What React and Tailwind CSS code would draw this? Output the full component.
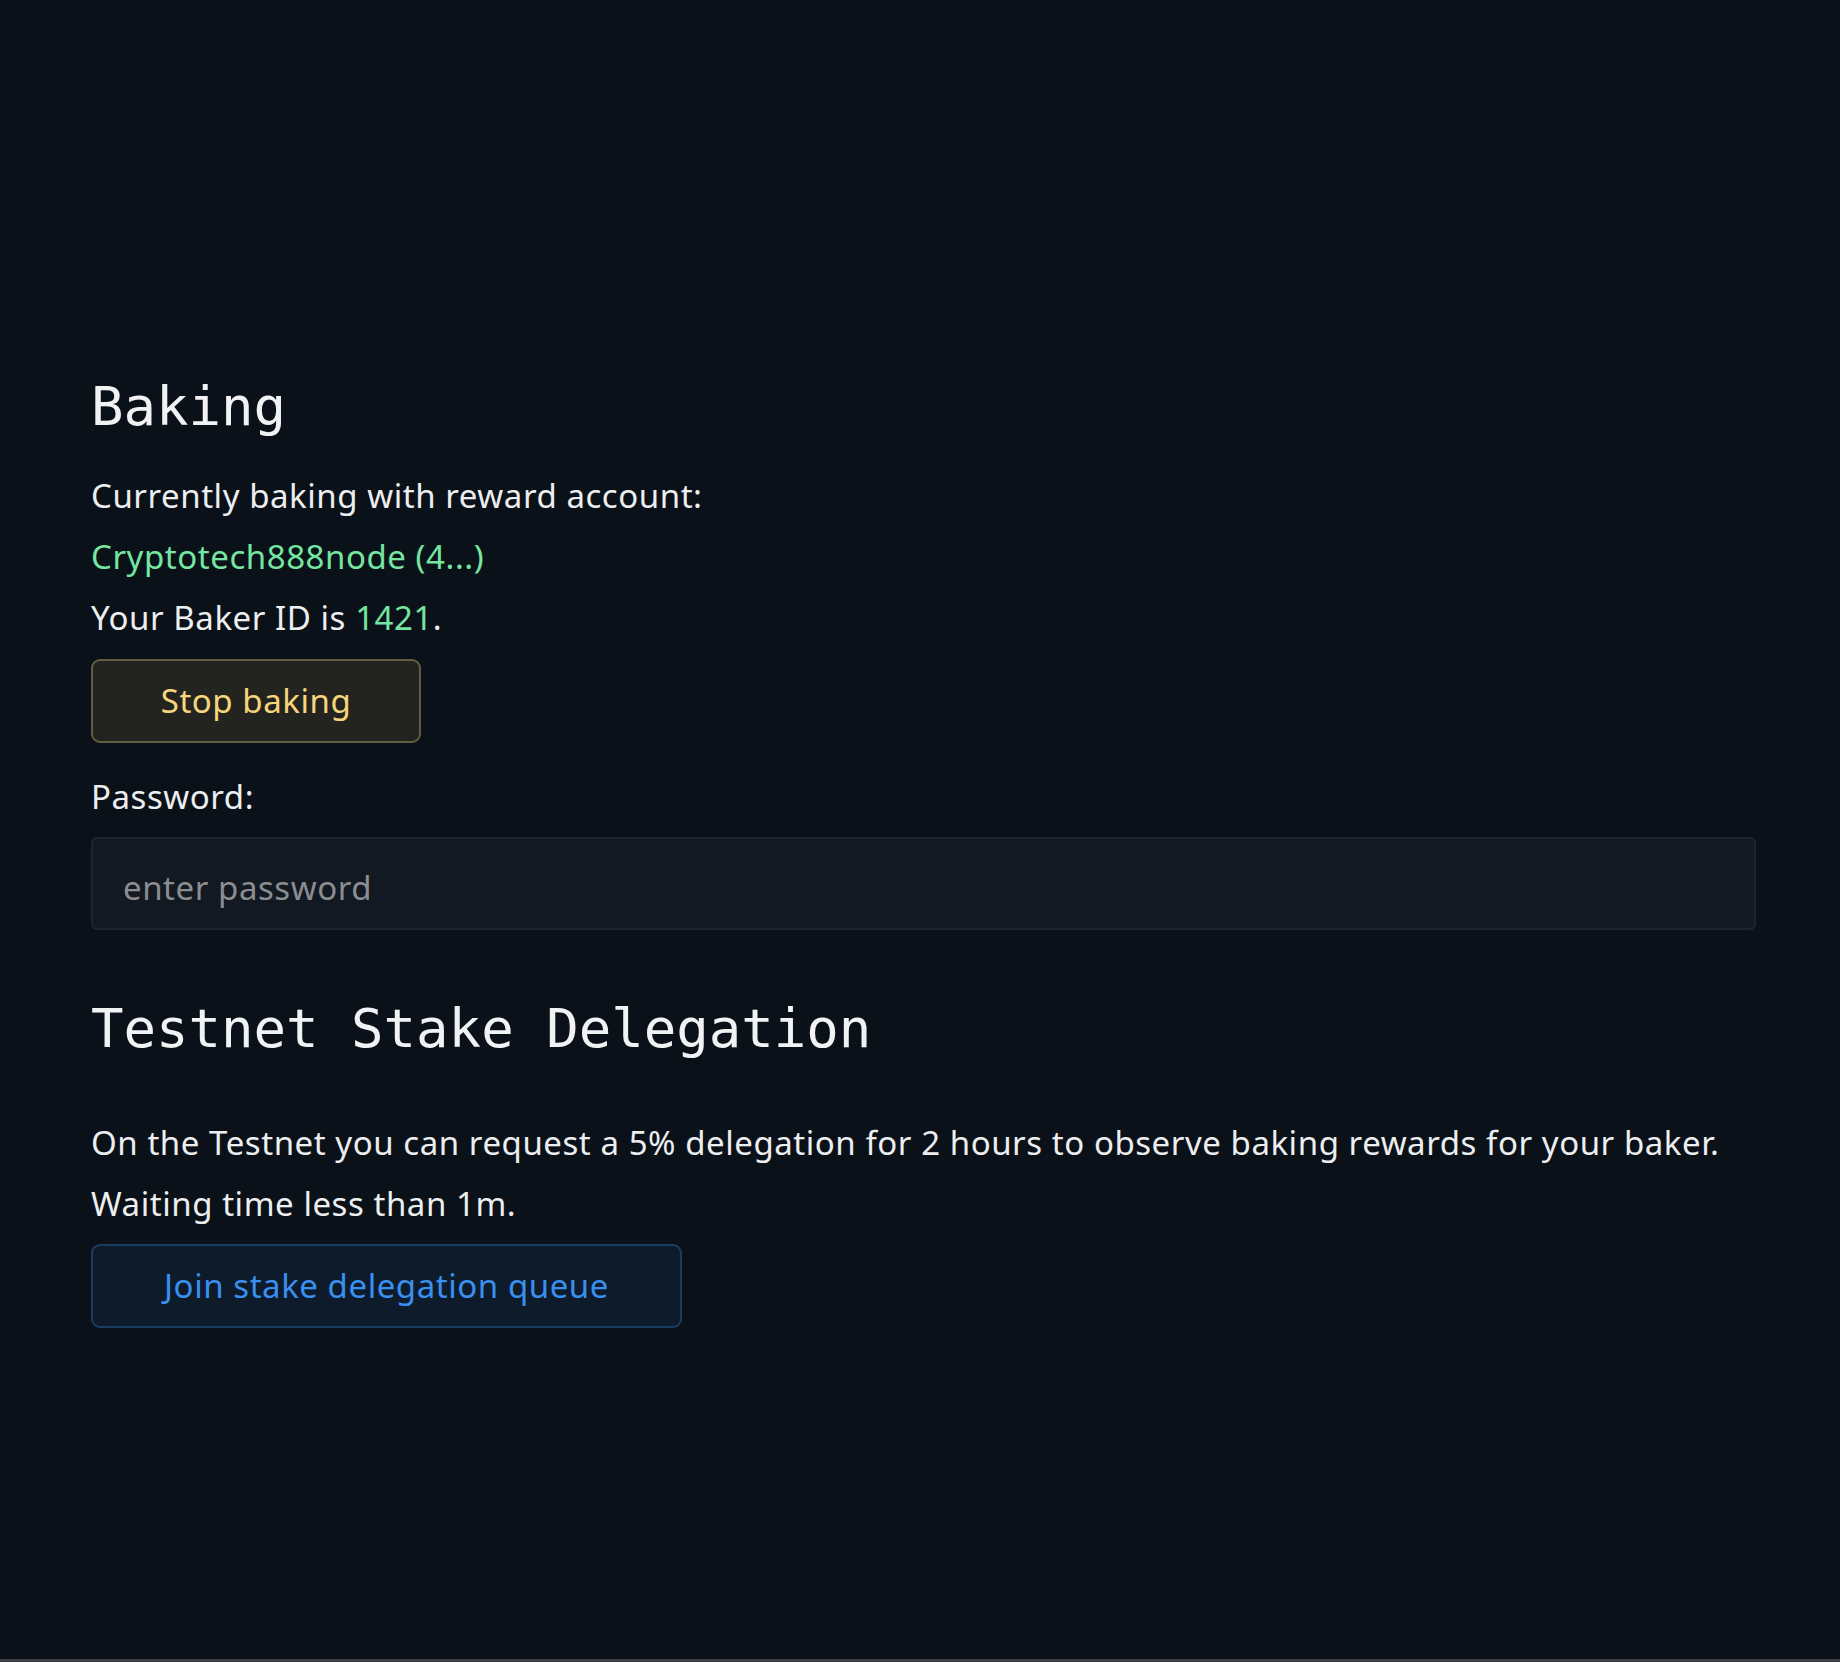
export default function App() {
  return (
    <div className="min-h-screen flex flex-col bg-[#0b1118] text-[#eceef0] font-['Noto_Sans',sans-serif] tracking-[0.55px]">
      <main className="flex-1 pl-[91px] pr-[84px] pt-[374px]">
        <h1 className="text-[54px] leading-[65px] font-normal tracking-normal text-[#f1f2f3] font-['DejaVu_Sans_Mono',monospace]">Baking</h1>

        <div className="mt-[26px] text-[33px] leading-[61px]">
          <p>Currently baking with reward account:</p>
          <p className="text-[#74e6a2]">Cryptotech888node (4...)</p>
          <p>Your Baker ID is <span className="text-[#74e6a2]">1421</span>.</p>
        </div>

        <button className="mt-[11px] w-[330px] h-[84px] rounded-[9px] border-2 border-[#625c40] bg-[#23241f] text-[33px] text-[#f7d57c]">
          Stop baking
        </button>

        <label className="block mt-[23px] text-[33px] leading-[61px]">Password:</label>
        <input
          type="password"
          placeholder="enter password"
          className="mt-[10px] block w-full h-[93px] rounded-[6px] border-2 border-[#1e252e] bg-[#131922] px-[30px] pt-[7px] text-[33px] tracking-[0.55px] text-[#eceef0] placeholder:text-[#8b8d90] outline-none"
        />

        <h2 className="mt-[66px] text-[54px] leading-[65px] font-normal tracking-normal text-[#f1f2f3] font-['DejaVu_Sans_Mono',monospace]">Testnet Stake Delegation</h2>

        <div className="mt-[51px] text-[33px] leading-[61px]">
          <p>On the Testnet you can request a 5% delegation for 2 hours to observe baking rewards for your baker.</p>
          <p>Waiting time less than 1m.</p>
        </div>

        <button className="mt-[10px] w-[591px] h-[84px] rounded-[9px] border-2 border-[#1b3d62] bg-[#0d1b2b] text-[33px] text-[#3a90ee]">
          Join stake delegation queue
        </button>
      </main>
      <div className="h-[3px] bg-[#3b3e43]" />
    </div>
  )
}
